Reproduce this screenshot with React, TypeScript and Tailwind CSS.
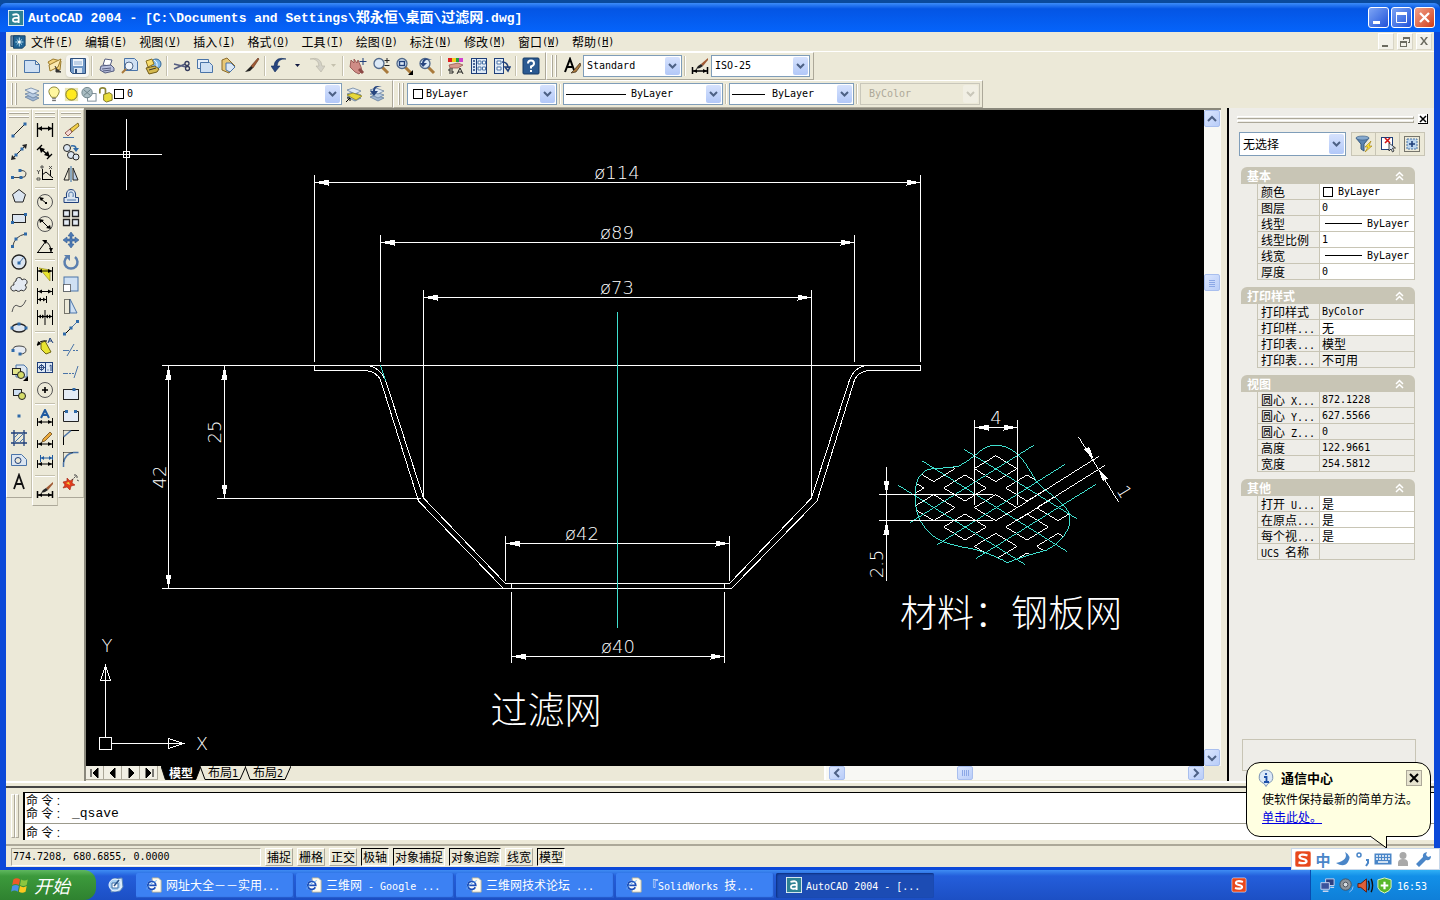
import type { ReactNode } from 'react';

const NAVY = '#1f3f7a';
const STEEL = '#4a74a8';
const CYAN = '#3fe0cf';

/* ---------- text ---------- */

// Latin runs are set in a half-width mono face, Chinese runs in the CJK face.
function Mix({ text, latin = "font-['DejaVu_Sans_Mono',monospace] text-[10px]" }: { text: string; latin?: string }) {
	return (
		<>
			{text.split(/([\x20-\x7e]+)/).map((part, i) =>
				i % 2 === 1 ? (
					<span key={i} className={`whitespace-pre ${latin}`}>
						{part}
					</span>
				) : (
					part
				),
			)}
		</>
	);
}

/* ---------- icons ---------- */

function Dot({ x, y }: { x: number; y: number }) {
	return <rect x={x - 1.5} y={y - 1.5} width={3} height={3} fill="#2f6aa8" stroke="none" />;
}

const dimBar = (y: number) => (
	<>
		<path d={`M1.5 ${y - 4}v8M16.5 ${y - 4}v8M2 ${y}h14`} stroke="#000" />
		<path d={`M2 ${y}l4 -2v4zM16 ${y}l-4 -2v4z`} fill="#000" />
	</>
);

const sheets = (
	<>
		<path d="M2 12l6 -2 8 3 -6 3z" fill="#9fb6d3" stroke="#5a7698" strokeWidth={0.7} />
		<path d="M2 9l6 -2 8 3 -6 3z" fill="#b9cce2" stroke="#5a7698" strokeWidth={0.7} />
		<path d="M2 5l6 -2 8 3 -6 3z" fill="#dfe9f5" stroke="#5a7698" strokeWidth={0.7} />
	</>
);

const lens = (
	<>
		<path d="M10 10l6 6" stroke="#a97a3c" strokeWidth={3} />
		<circle cx={7} cy={6.5} r={5} fill="#dce9f6" stroke="#50688a" strokeWidth={1.3} />
	</>
);

const brush = (
	<>
		<path d="M16 1l-7 8 2 2 6 -9z" fill="#a05a34" stroke="#5b2e1c" strokeWidth={0.6} />
		<path d="M9 9l2 2 -3 3 -5 1 3 -3z" fill="#222" />
	</>
);

const icons: Record<string, ReactNode> = {
	new: <path d="M1.500 3.500h11l4 4v8h-15zM12.500 3.500v4h4" fill="#cfe0f3" stroke={STEEL} />,
	open: (
		<>
			<path d="M2 5l5 -3 8 2 -1 9 -9 -3z" fill="#f3d27a" stroke="#9b7b2c" />
			<path d="M3 8l12 -6 -3 8 -8 4z" fill="#fbeab0" stroke="#9b7b2c" />
			<path d="M9 9l3 6M15 15h-5v-3z" stroke="#333" fill="#333" />
		</>
	),
	save: (
		<>
			<path d="M1.500 1.500h15v15h-13l-2 -2z" fill="#6f97c6" stroke="#2e4f7c" />
			<rect x={4} y={2} width={10} height={7} fill="#eef4fb" />
			<path d="M5 5h8M5 7h8" stroke="#8faed2" />
			<rect x={5} y={11} width={8} height={5} fill="#dbe6f2" />
			<rect x={6} y={12} width={2} height={4} fill="#2e4f7c" />
		</>
	),
	print: (
		<>
			<path d="M5 8l2 -6 7 1 -2 6z" fill="#fff" stroke="#555d80" />
			<path d="M3 9l10 -1 3 3v3l-9 2 -5 -3z" fill="#b8bfdc" stroke="#555d80" />
			<path d="M4 12l9 -1M5 14l8 -1" stroke="#555d80" />
		</>
	),
	preview: (
		<>
			<path d="M3.500 1.500h10l3 3v9h-13z" fill="#cfe0f3" stroke={STEEL} />
			<circle cx={8} cy={9} r={4} fill="#eef5fc" stroke="#50688a" />
			<path d="M5 12l-4 4" stroke="#a97a3c" strokeWidth={2} />
		</>
	),
	publish: (
		<>
			<circle cx={12} cy={7} r={5} fill="#7db7e8" stroke="#356796" />
			<path d="M10 3q5 3 2 9" stroke="#fff" fill="none" />
			<path d="M2 4l6 -2 2 5 -6 3z" fill="#f8dc6b" stroke="#8a701d" />
			<path d="M2 11l9 -2 4 3 -2 3 -8 2z" fill="#d5b94d" stroke="#6f5a17" />
			<path d="M5 13l7 -2" stroke="#333" />
		</>
	),
	cut: (
		<>
			<path d="M1 7l12 3M1 12l11 -5" stroke="#555d80" strokeWidth={1.5} />
			<circle cx={14} cy={6.5} r={2} fill="none" stroke="#333a5c" strokeWidth={1.3} />
			<circle cx={14.500} cy={11.500} r={2} fill="none" stroke="#333a5c" strokeWidth={1.3} />
		</>
	),
	copy: (
		<>
			<path d="M1.500 2.500h11v9h-11z" fill="#e5eef9" stroke={STEEL} />
			<path d="M4.500 5.500h9l3 3v7h-12z" fill="#cfe0f3" stroke={STEEL} />
		</>
	),
	paste: (
		<>
			<path d="M3 3l5 -2 8 8 -6 7 -7 -3z" fill="#e8c877" stroke="#8a6a2a" />
			<path d="M7 6l5 0 4 4 -5 5 -4 -2z" fill="#dbe8f6" stroke={STEEL} />
		</>
	),
	match: brush,
	undo: <path d="M15 2q-8 -1 -9 7h3l-5 6 -4 -6h3q1 -10 12 -7z" fill="#27457f" stroke="#16305e" strokeWidth={0.6} />,
	redo: <path d="M3 2q8 -1 9 7h-3l5 6 4 -6h-3q-1 -10 -12 -7z" fill="#d3d1c6" stroke="#b7b4a5" strokeWidth={0.6} />,
	pan: (
		<>
			<path d="M2 3l3 3 0 -4 3 4 1 -3 3 7 1 4 -3 3 -4 -2 -5 -5z" fill="#cf8c86" stroke="#8c4a46" strokeWidth={0.8} />
			<path d="M10 12l4 4" stroke="#8c4a46" strokeWidth={3} />
			<path d="M14 1v7M10.500 4.500h7" stroke={NAVY} />
		</>
	),
	zoomRt: (
		<>
			{lens}
			<path d="M15 1v5M12.500 3.500h5M12.500 8.500h5" stroke="#222" />
		</>
	),
	zoomWin: (
		<>
			{lens}
			<rect x={4.500} y={4.500} width={5} height={4} fill="none" stroke={NAVY} strokeWidth={1.4} />
			<path d="M18 13v5h-5z" fill="#000" />
		</>
	),
	zoomPrev: (
		<>
			{lens}
			<path d="M14 3q-7 -2 -8 3h3l-4 4 -3 -4h2q1 -7 10 -3z" fill="#27457f" />
		</>
	),
	props: (
		<>
			<path d="M1 1h4v4h-4z" fill="#e02020" />
			<path d="M5 1h4v4h-4z" fill="#f0d020" />
			<path d="M9 1h3v4h-3z" fill="#20a040" />
			<path d="M12 1h4v4h-4z" fill="#d040d0" />
			<path d="M2 8l9 -2 5 2 -5 3 -8 0z" fill="#d79a8e" stroke="#8c4a46" strokeWidth={0.7} />
			<path d="M6 12h-4v2h4v2h-4M10 17l3 -6 3 6M11 15h4" stroke="#222" fill="none" />
		</>
	),
	center: (
		<>
			<rect x={1.500} y={1.500} width={15} height={15} fill="#dfeaf6" stroke={NAVY} />
			<path d="M6.500 2v14" stroke={NAVY} />
			<path d="M3 4h2M3 7h2M3 10h2M3 13h2" stroke={NAVY} strokeWidth={1.4} />
			<path d="M8 4h3v3h-3zM12.500 4h3v3h-3zM8 10h3v3h-3zM12.500 10h3v3h-3z" fill="#fff" stroke={STEEL} />
		</>
	),
	palettes: (
		<>
			<rect x={1.500} y={1.500} width={9} height={15} fill="#dfeaf6" stroke={NAVY} />
			<path d="M4 4h4v3h-4zM4 10h4v3h-4z" fill="#fff" stroke={STEEL} />
			<path d="M9 5q6 0 6 6M12 10l3 4 2 -4z" stroke={NAVY} fill="none" strokeWidth={1.5} />
		</>
	),
	help: (
		<>
			<rect x={1} y={1} width={16} height={16} rx={1} fill="#2b5a92" stroke="#173a66" />
			<path d="M6 6.500q0 -3 3 -3t3 3q0 2 -3 3v2M9 13v2" stroke="#fff" fill="none" strokeWidth={2} />
		</>
	),
	textStyle: (
		<>
			<path d="M2 15l5 -13 4 11M4 10h5" stroke="#000" fill="none" strokeWidth={2} />
			<path d="M17 6l-6 7 -3 3 5 -1 5 -7z" fill="#a9793e" stroke="#3b2a17" strokeWidth={0.7} />
		</>
	),
	dimStyle: (
		<>
			<path d="M1.500 10v7M16.500 10v7M2 14h14" stroke="#000" strokeWidth={1.5} />
			<path d="M2 14l4 -2v4zM16 14l-4 -2v4z" fill="#000" />
			<path d="M17 1l-7 6 2 2 5 -6z" fill="#a05a34" />
			<path d="M10 7l2 2 -3 2 -4 1 2 -3z" fill="#222" />
		</>
	),
	layers: sheets,
	layerCur: (
		<>
			{sheets}
			<path d="M2 10l6 -2 9 3 -6 4z" fill="#e6d83a" stroke="#8a7d14" strokeWidth={0.7} />
			<path d="M1 17l4 -4M2 13h3v3" stroke="#000" fill="none" />
		</>
	),
	layerPrev: (
		<>
			{sheets}
			<path d="M14 2q-7 -1 -7 4h3l-4 5 -4 -5h3q0 -7 9 -4z" fill="#27457f" />
		</>
	),
	bulb: (
		<>
			<path d="M6 12q-3 -4 -3 -6a5.500 5 0 0 1 11 0q0 2 -3 6z" fill="#fff7a0" stroke="#8a8432" />
			<path d="M6.500 13.500h4M6.500 15.500h4" stroke="#555" />
		</>
	),
	sun: (
		<>
			<path d="M2 2h14v14h-14z" fill="#e9e5b0" />
			<circle cx={9} cy={9} r={6} fill="#ffea20" stroke="#77712a" />
		</>
	),
	vpFreeze: (
		<>
			<rect x={8} y={8} width={9} height={8} fill="#fff" stroke="#7a8a94" />
			<circle cx={7.500} cy={7} r={5.500} fill="#a9bcc2" stroke="#6c8288" />
			<path d="M4 4l7 6M4 10l7 -6" stroke="#6c8288" />
		</>
	),
	lock: (
		<>
			<path d="M3 8v-4q0 -2 3 -2t3 2v6" stroke="#8a8432" fill="none" strokeWidth={1.8} />
			<path d="M7 9l6 -2 3 2v6l-6 2 -3 -2z" fill="#e8dc38" stroke="#77712a" />
		</>
	),

	line: (
		<>
			<path d="M3 15l12 -12" stroke="#222" />
			<Dot x={3} y={15} />
			<Dot x={15} y={3} />
		</>
	),
	xline: (
		<>
			<path d="M2 16l14 -14" stroke="#222" />
			<path d="M1 17l1 -5 4 4zM17 1l-5 1 4 4z" fill="#222" />
			<Dot x={6} y={12} />
			<Dot x={12} y={6} />
		</>
	),
	pline: (
		<>
			<path d="M2 12.500h10q4 0 4 -3.500t-5 -3.500" stroke="#444" fill="none" />
			<Dot x={2.500} y={12.500} />
			<Dot x={11} y={12.500} />
			<Dot x={10} y={5.500} />
		</>
	),
	polygon: <path d="M9 2.500l6.500 5 -2.500 7.500h-8l-2.500 -7.500z" fill="#dbe5f0" stroke="#222" />,
	rect: (
		<>
			<rect x={2.500} y={5.500} width={13} height={8} fill="#dbe5f0" stroke="#222" />
			<Dot x={2.500} y={13.500} />
			<Dot x={15.500} y={5.500} />
		</>
	),
	arc: (
		<>
			<path d="M2.500 16q2 -11 13 -13" stroke="#444" fill="none" />
			<Dot x={2.500} y={15.500} />
			<Dot x={6} y={8} />
			<Dot x={15.500} y={3} />
		</>
	),
	circle: (
		<>
			<circle cx={9} cy={9} r={7} fill="#dbe5f0" stroke="#222" strokeWidth={1.3} />
			<path d="M9 10l5 -6" stroke={STEEL} />
			<Dot x={9} y={10} />
		</>
	),
	cloud: (
		<path
			d="M6 6a3 3 0 1 1 6 -1a3 3 0 1 1 3 5a3 3 0 1 1 -4 5a3 3 0 0 1 -5 0a3 3 0 1 1 -2 -5a3 3 0 0 1 2 -4z"
			fill="#e4eaf2"
			stroke="#333"
		/>
	),
	spline: <path d="M2 15q2 -9 6 -6t8 -6" stroke="#555" fill="none" />,
	ellipse: (
		<>
			<ellipse cx={9} cy={9} rx={7} ry={4} fill="#dbe5f0" stroke="#222" strokeWidth={1.3} />
			<Dot x={2} y={9} />
			<Dot x={16} y={9} />
			<Dot x={9} y={5} />
		</>
	),
	ellArc: (
		<>
			<path d="M3 10q-1 -5 6 -5t7 4 -6 4" fill="#e4eaf2" stroke="#444" />
			<Dot x={3} y={9.500} />
			<Dot x={10} y={13} />
		</>
	),
	insert: (
		<>
			<path d="M6 2h8l3 3v9h-11z" fill="#dbe5f0" stroke={STEEL} />
			<rect x={2.500} y={5.500} width={8} height={6} fill="#e3e58b" stroke="#222" />
			<circle cx={11} cy={12} r={3.500} fill="#d5dc68" stroke="#222" />
			<path d="M18 13v5h-5z" fill="#000" />
		</>
	),
	block: (
		<>
			<rect x={3.500} y={4.500} width={8} height={6} fill="#cfe0f3" stroke="#222" />
			<circle cx={12} cy={11} r={3.500} fill="#d5dc68" stroke="#222" />
		</>
	),
	point: <Dot x={9} y={9} />,
	hatch: (
		<>
			<path d="M4 1v16M14 1v16M1 4h16M1 14h16" stroke={NAVY} strokeWidth={1.3} />
			<path d="M4 9l5 -5M4 14l10 -10M9 14l5 -5" stroke={STEEL} />
		</>
	),
	region: (
		<>
			<path d="M1.500 3.500h10l5 5v6h-15z" fill="#dbe5f0" stroke={STEEL} />
			<circle cx={8} cy={9.500} r={3} fill="#ece9d8" stroke={NAVY} />
		</>
	),
	mtext: <path d="M4 16l5 -14 5 14M6 11h6" stroke="#111" fill="none" strokeWidth={1.8} />,

	dLinear: (
		<>
			<path d="M1.500 2v14M16.500 2v14M2 7.500h14" stroke="#000" strokeWidth={1.3} />
			<path d="M2 7.500l4 -2.500v5zM16 7.500l-4 -2.500v5z" fill="#000" />
		</>
	),
	dAligned: (
		<>
			<path d="M4 5l9 8M1 7l5 -5M11 16l5 -5" stroke="#000" strokeWidth={1.3} />
			<path d="M3 4l6 2 -4 4zM14 14l-6 -2 4 -4z" fill="#000" />
		</>
	),
	dOrdinate: (
		<>
			<path d="M6.500 4v11M6 10l4 -3 7 6M6 14.500h11M14.500 5v6" stroke="#000" fill="none" />
			<path d="M1 5l1.500 2 1.500 -2M2.500 7v2M1 13h3v2h-3zM5 1h2v2h-2zM13 1l3 3M16 1l-3 3" stroke="#333" fill="none" strokeWidth={0.8} />
		</>
	),
	dRadius: (
		<>
			<circle cx={9} cy={9} r={7.500} fill="none" stroke="#555" />
			<path d="M10 10l-5 -4" stroke="#000" />
			<path d="M3 4l5 1 -3 3zM9 9h2v2h-2z" fill="#000" />
		</>
	),
	dDiameter: (
		<>
			<circle cx={9} cy={9} r={7.500} fill="none" stroke="#555" />
			<path d="M5 5l8 8" stroke="#000" />
			<path d="M3 4l5 1 -4 3zM15 14l-5 -1 4 -3z" fill="#000" />
		</>
	),
	dAngular: (
		<>
			<path d="M1 15.500h16M2 15l8 -11M9 4q6 3 6 11" stroke="#000" fill="none" />
			<path d="M6 3l5 0 -1 4zM13 11h4l-2 4z" fill="#000" />
		</>
	),
	dQuick: (
		<>
			<path d="M3 3l11 2 0 11z" fill="#e9e430" stroke="#8a7d14" strokeWidth={0.6} />
			{dimBar(6)}
			<path d="M1.500 2v14M16.500 2v14" stroke="#000" />
		</>
	),
	dBaseline: (
		<>
			<path d="M1.500 1v16M2 4.500h14M16.500 1v7M2 12.500h8M10.500 9v7" stroke="#000" />
			<path d="M2 4.500l4 -2v4zM16 4.500l-4 -2v4zM2 12.500l3 -2v4zM10 12.500l-3 -2v4z" fill="#000" />
		</>
	),
	dContinue: (
		<>
			<path d="M1.500 1v15M9 1v15M16.500 1v15M2 7.500h14" stroke="#000" />
			<path d="M2 7.500l3 -2v4zM16 7.500l-3 -2v4zM9 7.500l-3 -2v4zM9 7.500l3 -2v4z" fill="#000" />
		</>
	),
	dLeader: (
		<>
			<path d="M5 6l4 -2 6 11 -5 2 -5 -5z" fill="#e9e430" stroke="#6d6412" />
			<path d="M1 8q3 -5 10 -4" stroke="#000" fill="none" />
			<path d="M1 9l1 -5 3 3z" fill="#000" />
			<path d="M12 6l2 -5 3 5M13 4h3" stroke={NAVY} fill="none" />
		</>
	),
	dTol: (
		<>
			<rect x={1.500} y={3.500} width={15} height={10} fill="#dfeaf6" stroke={NAVY} />
			<path d="M9.500 4v9M12 10.500v1M13.500 7l1.500 -1v6" stroke={NAVY} fill="none" />
			<circle cx={5.500} cy={8.500} r={2.300} fill="none" stroke={NAVY} />
			<path d="M5.500 5v7M2 8.500h7" stroke={NAVY} strokeWidth={0.8} />
		</>
	),
	dCenter: (
		<>
			<circle cx={9} cy={9} r={7.500} fill="none" stroke="#555" />
			<path d="M9 6v6M6 9h6" stroke="#000" strokeWidth={1.6} />
		</>
	),
	dEdit: (
		<>
			<path d="M5 9l4 -8 4 8M6.500 6h5" stroke="#1f5aa0" fill="none" strokeWidth={2} />
			{dimBar(13)}
		</>
	),
	dTextEdit: (
		<>
			<path d="M14 1l-7 7 -1 3 3 -1 7 -7z" fill="#e9a83a" stroke="#5a3a10" strokeWidth={0.7} />
			{dimBar(13)}
		</>
	),
	dUpdate: (
		<>
			<path d="M4.500 2v7M16.500 2v7M5 5h11" stroke="#1f5aa0" />
			<path d="M5 5l3 -2v4zM16 5l-3 -2v4z" fill="#1f5aa0" />
			{dimBar(11)}
		</>
	),

	erase: (
		<>
			<path d="M16 2l-8 6 2 3 7 -6z" fill="#f3d04a" stroke="#6b5410" strokeWidth={0.8} />
			<path d="M8 8l2 3 -4 4 -3 -3z" fill="#f4d9d4" stroke="#7d3a36" strokeWidth={0.8} />
			<path d="M1 16.500h11" stroke={STEEL} />
		</>
	),
	mcopy: (
		<>
			<circle cx={5} cy={5} r={3.500} fill="#dbe5f0" stroke="#222" />
			<circle cx={9} cy={12} r={3.500} fill="#dbe5f0" stroke="#222" />
			<circle cx={14} cy={14} r={3} fill="#dbe5f0" stroke="#222" />
			<path d="M9 3q5 -1 5 3" stroke="#2f6aa8" fill="none" strokeWidth={1.500} />
			<path d="M11 5h6l-3 4z" fill="#2f6aa8" />
		</>
	),
	mirror: (
		<>
			<path d="M7 3v12h-5z" fill="#ece9d8" stroke="#222" />
			<path d="M11 3v12h5z" fill="#bcd0e8" stroke="#222" />
			<path d="M9 1v16" stroke="#2f6aa8" />
		</>
	),
	offset: (
		<>
			<path d="M2 15.500h14.500v-5h-3q1 -8 -4.500 -8t-4.500 8h-2.500z" fill="#dbe5f0" stroke={NAVY} />
			<path d="M5 13h9M7 10q-1 -5 2 -5t2 5" fill="none" stroke={STEEL} />
		</>
	),
	array: (
		<path
			d="M1.500 1.500h6v6h-6zM10.500 1.500h6v6h-6zM10.500 10.500h6v6h-6zM1.500 10.500h6v6h-6z"
			fill="#e4ecf5"
			stroke="#222"
			strokeWidth={1.3}
		/>
	),
	move: (
		<path
			d="M9 1l3 4h-2v3h3v-2l4 3 -4 3v-2h-3v3h2l-3 4 -3 -4h2v-3h-3v2l-4 -3 4 -3v2h3v-3h-2z"
			fill="#4a78b4"
			stroke="#345c90"
			strokeWidth={0.6}
		/>
	),
	rotate: (
		<>
			<path d="M5 4a6.500 6.500 0 1 0 8 0" fill="none" stroke="#5b7fae" strokeWidth={2.500} />
			<path d="M2 2h6v6z" fill="#5b7fae" />
		</>
	),
	scale: (
		<>
			<rect x={2} y={2} width={14} height={14} fill="#cfe0f3" stroke={STEEL} />
			<rect x={1.500} y={9.500} width={7} height={7} fill="#fff" stroke="#000" strokeDasharray="1 1" />
		</>
	),
	stretch: (
		<>
			<path d="M8 2l7 14h-7z" fill="#cfe0f3" stroke={STEEL} />
			<path d="M2.500 2.500h5v14h-5z" fill="none" stroke="#000" strokeDasharray="1 1" />
		</>
	),
	lengthen: (
		<>
			<path d="M3 15l5 -5" stroke="#000" />
			<path d="M8 10l7 -7" stroke={STEEL} />
			<Dot x={2.500} y={15} />
			<Dot x={9} y={9} />
			<Dot x={15.500} y={2.500} />
		</>
	),
	trim: (
		<>
			<path d="M1 9.500h6M5 15l7 -12" stroke={STEEL} />
			<path d="M11 9.500h6" stroke={STEEL} strokeDasharray="2 1" />
		</>
	),
	extend: (
		<>
			<path d="M1 10.500h5M12 15l4 -12" stroke={STEEL} />
			<path d="M7 10.500h6" stroke={STEEL} strokeDasharray="2 1" />
		</>
	),
	breakPt: (
		<>
			<rect x={1.500} y={4.500} width={15} height={10} fill="#e4ecf5" stroke="#222" />
			<Dot x={12} y={4.500} />
		</>
	),
	break: (
		<>
			<path d="M4 4.500h-2.500v10h15v-10h-2.500" fill="#e4ecf5" stroke="#222" />
			<Dot x={4.500} y={4.500} />
			<Dot x={13.500} y={4.500} />
		</>
	),
	chamfer: (
		<>
			<path d="M1.500 16v-8M9 1.500h8" stroke="#000" />
			<path d="M1.500 8l7.500 -6.500" stroke={STEEL} strokeWidth={1.5} />
			<path d="M1.500 1.500h7M1.500 1.500v7" stroke="#000" strokeDasharray="1 1" />
		</>
	),
	fillet: (
		<>
			<path d="M1.500 16v-4q1 -9 10 -10.500h5" stroke={STEEL} fill="none" strokeWidth={1.5} />
			<path d="M1.500 1.500h9M1.500 1.500v9" stroke="#000" strokeDasharray="1 1" />
		</>
	),
	explode: (
		<>
			<path d="M1 9l4 -1 0 -3 3 3 3 -2 -1 4 3 2 -4 1 -1 4 -3 -3 -4 1 2 -3z" fill="#e23c1c" stroke="#a02010" strokeWidth={0.6} />
			<path d="M4 10l3 -1 1 3z" fill="#f6d23a" />
			<path d="M10 7l5 -5M13 1v3M16 4h-3M15 7l2 1" stroke="#444" strokeDasharray="2 1" />
		</>
	),

	filter: (
		<>
			<path d="M1 3h13l-5 6v7l-3 -2v-5z" fill="#5c84b0" stroke="#34587f" />
			<ellipse cx={7.500} cy={3} rx={6.500} ry={2} fill="#86a9cd" stroke="#34587f" strokeWidth={0.6} />
			<path d="M16 6l-6 6h3l-3 5 7 -6h-3z" fill="#ffe233" stroke="#9c7b10" strokeWidth={0.6} />
		</>
	),
	pick: (
		<>
			<rect x={2.500} y={2.500} width={11} height={12} fill="#fff" stroke={NAVY} />
			<path d="M6 3l5 5M11 3l-5 5" stroke="#d01010" strokeWidth={1.6} />
			<path d="M10 8v8l2 -2 1.500 3 1.500 -1 -1.500 -3h3z" fill="#dfeaf6" stroke="#222" strokeWidth={0.8} />
		</>
	),
	quickSel: (
		<>
			<rect x={1.500} y={1.500} width={15} height={15} fill="none" stroke="#000" strokeDasharray="1 1" />
			<rect x={4} y={4} width={10} height={10} fill="#bcd6ee" stroke={STEEL} strokeDasharray="2 1" />
			<path d="M9 6v6M6 9h6" stroke={NAVY} strokeWidth={1.6} />
		</>
	),

	ie: (
		<>
			<path d="M7 1h7l3 3v13h-10z" fill="#fdfbf0" stroke="#b9b59a" />
			<circle cx={6.500} cy={9.500} r={5.500} fill="#fff" />
			<path d="M10.500 11.500a4.500 4.500 0 1 1 0.500 -2h-8" fill="none" stroke="#1c4fb8" strokeWidth={2} />
			<path d="M1 14q-1 -4 11 -10" stroke="#64a6f0" fill="none" />
		</>
	),
	doc: (
		<>
			<path d="M1 2h10v12h-10z" fill="#6d8aa6" stroke="#2c4b6b" />
			<path d="M4 2h13v11l-3 3h-10z" fill="#1f6394" stroke="#123d63" />
			<path d="M10.500 4v10M6 9h9M7.500 6l6 6M13.500 6l-6 6" stroke="#c8ecf8" />
			<circle cx={10.500} cy={9} r={1.500} fill="#fff" />
		</>
	),
	app: (
		<>
			<rect x={0.500} y={0.500} width={17} height={17} fill="#2e8294" stroke="#eaf6f8" />
			<path d="M5 5.500q7 -2 7 1.500v7.500M12 9q-6.500 -1 -6.500 2.200t6.500 1.300" fill="none" stroke="#fff" strokeWidth={2} />
		</>
	),
	desktop: (
		<>
			<path d="M5 3l10 -1 1 9 -3 4 -9 1z" fill="#d8e8f8" stroke="#5c86b8" />
			<circle cx={8} cy={9} r={6} fill="#a9d0f2" stroke="#e8f4ff" />
			<path d="M5 7h6v5h-6z" fill="#fff" stroke="#3f70a8" />
			<path d="M12 4l-5 6" stroke="#2c568c" strokeWidth={1.500} />
		</>
	),
	sogou: (
		<>
			<rect x={1} y={1} width={16} height={16} rx={2} fill="#e8481c" stroke="#fff" strokeWidth={0.6} />
			<path d="M13.500 5.500C9 4 5.500 4.500 5.500 6.700C5.500 9.500 12.500 8.500 12.500 11.200C12.500 13.500 8 13.500 4.500 12.300" fill="none" stroke="#fff" strokeWidth={2.300} />
		</>
	),
	flag: (
		<>
			<path d="M3 4q3 -2 6 0l-1 5q-3 -2 -6 0z" fill="#ee5a28" />
			<path d="M10 4q3 2 6 0l-1 5q-3 2 -6 0z" fill="#8cc63f" />
			<path d="M2 10q3 -2 6 0l-1 5q-3 -2 -6 0z" fill="#4a90e8" />
			<path d="M9 10q3 2 6 0l-1 5q-3 2 -6 0z" fill="#fcc820" />
		</>
	),
	net: (
		<>
			<path d="M7 2h9v7h-9z" fill="#2c3f80" stroke="#c8d4f0" />
			<path d="M2 6h9v7h-9z" fill="#3a539c" stroke="#c8d4f0" />
			<path d="M4 15h6M12 11h4" stroke="#c8d4f0" strokeWidth={1.5} />
		</>
	),
	sound: (
		<>
			<circle cx={8} cy={8} r={6} fill="#8d959c" stroke="#49525c" />
			<circle cx={8} cy={8} r={2.500} fill="#d8dde2" stroke="#49525c" />
			<path d="M12 16q4 -2 4 -6" stroke="#9cc4f8" fill="none" />
		</>
	),
	speaker: (
		<>
			<path d="M1 7h3l6 -5v14l-6 -5h-3z" fill="#e06038" stroke="#5b1c10" />
			<path d="M12 4q2 5 0 10M15 2q3 7 0 14" stroke="#111" fill="none" strokeWidth={1.5} />
		</>
	),
	shield: (
		<>
			<path d="M9 1l7 2v8q-1 4 -7 6q-6 -2 -7 -6v-8z" fill="#58b82a" stroke="#e3f5c8" />
			<path d="M9 5v8M5 9h8" stroke="#fff" strokeWidth={2.300} />
		</>
	),
	moon: <path d="M11 2q4 8 -9 11q8 5 12 -1t-3 -10z" fill="#4a86c8" />,
	punct: (
		<>
			<circle cx={5} cy={5} r={2} fill="none" stroke="#4a86c8" strokeWidth={1.5} />
			<path d="M12 10h2v3l-2 3" stroke="#4a86c8" strokeWidth={2} fill="none" />
		</>
	),
	keyboard: (
		<>
			<rect x={0.500} y={3.500} width={17} height={11} fill="#4a86c8" />
			<path d="M2 6h14M2 9h14" stroke="#fff" strokeWidth={1.5} strokeDasharray="2 1" />
			<path d="M4 12h10" stroke="#fff" strokeWidth={1.5} />
		</>
	),
	person: (
		<>
			<circle cx={9} cy={5.500} r={3.500} fill="#a9a9a9" />
			<path d="M4 16v-3q0 -4 5 -4t5 4v3z" fill="#a9a9a9" />
		</>
	),
	wrench: <path d="M2 14l7 -7q-1 -4 4 -5l-1 3 2 2 3 -1q0 5 -5 4l-7 7z" fill="#4a86c8" />,
	info: (
		<>
			<path d="M9 1a7.500 7 0 0 1 2 13.500l-2 3 -2 -3a7.500 7 0 0 1 2 -13.500z" fill="#dce9f8" stroke="#7a93b4" />
			<path d="M9 4v2M7 8h2.500v5M7 13h5" stroke="#1c4fa8" strokeWidth={1.800} fill="none" />
		</>
	),
};

function Icon({ name, className = 'size-[18px]' }: { name: string; className?: string }) {
	return (
		<svg viewBox="0 0 18 18" className={`${className} shrink-0`} fill="none" aria-hidden="true">
			{icons[name]}
		</svg>
	);
}

/* ---------- controls ---------- */

function ToolButton({ name, active }: { name: string; active?: boolean }) {
	return (
		<button
			type="button"
			aria-label={name}
			className={`flex h-[22px] w-[23px] shrink-0 items-center justify-center ${active ? 'rounded-sm bg-[#f8f7f2] shadow-sm' : ''}`}
		>
			<Icon name={name} />
		</button>
	);
}

function VSep() {
	return <div className="mx-[2px] h-5 w-[2px] shrink-0 border-l border-r border-l-[#c5c1ae] border-r-white" />;
}

function HSep() {
	return <div className="mx-px my-[2px] h-[2px] w-5 border-t border-b border-t-[#c5c1ae] border-b-white" />;
}

function Caret({ muted }: { muted?: boolean }) {
	return (
		<svg viewBox="0 0 13 6" className="h-[6px] w-[13px] shrink-0" aria-hidden="true">
			<path d="M4 1h5l-2.500 3z" fill={muted ? '#c5c1ae' : '#101840'} />
		</svg>
	);
}

function Grip() {
	return (
		<div className="flex w-[13px] shrink-0 justify-center gap-[2px] self-stretch py-[2px]">
			<div className="w-[2px] border-r border-l border-l-white border-r-[#aca899]" />
			<div className="w-[2px] border-r border-l border-l-white border-r-[#aca899]" />
		</div>
	);
}

function Combo({
	label,
	value,
	width,
	pad = 'pl-[3px]',
	disabled,
	cjk,
	height = 'h-[22px]',
	children,
}: {
	label: string;
	value: string;
	width: string;
	pad?: string;
	disabled?: boolean;
	cjk?: boolean;
	height?: string;
	children?: ReactNode;
}) {
	return (
		<div className={`relative shrink-0 ${width} ${height}`}>
			<select
				aria-label={label}
				disabled={disabled}
				defaultValue={value}
				className={`size-full appearance-none border ${cjk ? "font-['Noto_Sans_CJK_SC',sans-serif] text-xs" : "font-['DejaVu_Sans_Mono',monospace] text-[10px]"} ${pad} ${disabled ? 'border-[#c9c7ba] bg-[#ece9d8] text-[#aca899] opacity-100' : 'border-[#7f9db9] bg-white text-black'}`}
			>
				<option>{value}</option>
			</select>
			<div className="pointer-events-none absolute inset-y-0 left-[3px] flex items-center">{children}</div>
			<div
				className={`pointer-events-none absolute top-[2px] right-[2px] bottom-[2px] flex w-[15px] items-center justify-center rounded-xs ${disabled ? 'bg-[#f1efe4]' : 'bg-linear-to-b from-[#d6e2fd] to-[#b2c8f8]'}`}
			>
				<svg viewBox="0 0 9 6" className="h-[6px] w-[9px]" aria-hidden="true">
					<path d="M1 1l3.500 3.500l3.500 -3.500" fill="none" stroke={disabled ? '#c9c7ba' : '#4d6185'} strokeWidth={2} />
				</svg>
			</div>
		</div>
	);
}

function Swatch() {
	return <div className="size-[10px] border border-black bg-white" />;
}

const bar = 'flex h-7 items-center border border-t-white border-l-white border-r-[#aca899] border-b-[#aca899]';

/* ---------- title, menu, toolbars ---------- */

function TitleBar() {
	const frame = 'flex size-[21px] items-center justify-center rounded-[3px] border border-white';
	return (
		<header className="flex h-[29px] shrink-0 items-center rounded-t-md bg-linear-to-b from-[#3c8cf8] via-[#0455e4] via-20% to-[#0564fb] pr-[5px] pl-2">
			<Icon name="app" className="size-4" />
			<h1 className="ml-1 flex-1 font-['Noto_Sans_CJK_SC',sans-serif] text-sm leading-[20px] font-bold whitespace-nowrap text-white">
				<Mix
					text="AutoCAD 2004 - [C:\Documents and Settings\郑永恒\桌面\过滤网.dwg]"
					latin="font-['Liberation_Mono',monospace] text-[13px]"
				/>
			</h1>
			<div className="flex gap-[2px]">
				<button type="button" aria-label="最小化" className={`${frame} bg-linear-to-br from-[#7ea4f4] to-[#2150d8]`}>
					<svg viewBox="0 0 19 19" className="size-[19px]">
						<path d="M4 13h7v3h-7z" fill="#fff" />
					</svg>
				</button>
				<button type="button" aria-label="还原" className={`${frame} bg-linear-to-br from-[#7ea4f4] to-[#2150d8]`}>
					<svg viewBox="0 0 19 19" className="size-[19px]">
						<path d="M4.500 5v9.500h10v-10M4 5h11" fill="none" stroke="#fff" />
						<path d="M4 4h11v3h-11z" fill="#fff" />
					</svg>
				</button>
				<button type="button" aria-label="关闭" className={`${frame} bg-linear-to-br from-[#f0a088] to-[#d03a10]`}>
					<svg viewBox="0 0 19 19" className="size-[19px]">
						<path d="M5 5l9 9M14 5l-9 9" stroke="#fff" strokeWidth={2.300} />
					</svg>
				</button>
			</div>
		</header>
	);
}

const menus = [
	['文件', 'F'],
	['编辑', 'E'],
	['视图', 'V'],
	['插入', 'I'],
	['格式', 'O'],
	['工具', 'T'],
	['绘图', 'D'],
	['标注', 'N'],
	['修改', 'M'],
	['窗口', 'W'],
	['帮助', 'H'],
];

function MenuBar() {
	return (
		<nav className="flex h-5 shrink-0 items-center border-b border-white pr-[2px] pl-1">
			<Icon name="doc" className="size-4" />
			<div className="flex flex-1 gap-3 pl-[5px]">
				{menus.map(([name, key]) => (
					<button key={key} type="button" className="flex items-center leading-[18px]">
						{name}
						<span className="font-['DejaVu_Sans_Mono',monospace] text-[10px]">
							(<u>{key}</u>)
						</span>
					</button>
				))}
			</div>
			<div className="flex gap-[3px]">
				{['M3 11h6v2h-6z', 'M5 3h7v6h-2v-1h1v-3h-5v1h-1zM2 7h7v6h-7zM3 9v3h5v-3z', 'M3 3h2l2 3l2 -3h2l-3 4l3 4h-2l-2 -3l-2 3h-2l3 -4z'].map(d => (
					<button key={d} type="button" aria-label="文档窗口" className="h-[17px] w-4 border border-t-white border-l-white border-r-[#d8d5c6] border-b-[#d8d5c6] bg-[#f3f2ea]">
						<svg viewBox="0 0 14 15" className="h-[15px] w-[14px]">
							<path d={d} fill="#6b6b60" fillRule="evenodd" />
						</svg>
					</button>
				))}
			</div>
		</nav>
	);
}

const standardGroups = [
	['new', 'open', 'save'],
	['print', 'preview', 'publish'],
	['cut', 'copy', 'paste', 'match'],
];

function Toolbars() {
	return (
		<div className="flex shrink-0 flex-col">
			<div className="flex">
				<div className={`${bar} w-[540px] shrink-0`}>
					<Grip />
					{standardGroups.map((group, i) => (
						<div key={i} className="flex items-center">
							{group.map(name => (
								<ToolButton key={name} name={name} active={name === 'save'} />
							))}
							<VSep />
						</div>
					))}
					<ToolButton name="undo" />
					<Caret />
					<ToolButton name="redo" />
					<Caret muted />
					<VSep />
					{['pan', 'zoomRt', 'zoomWin', 'zoomPrev'].map(name => (
						<ToolButton key={name} name={name} />
					))}
					<VSep />
					{['props', 'center', 'palettes'].map(name => (
						<ToolButton key={name} name={name} />
					))}
					<VSep />
					<ToolButton name="help" />
				</div>
				<div className={`${bar} w-[268px] shrink-0`}>
					<Grip />
					<ToolButton name="textStyle" />
					<Combo label="文字样式" value="Standard" width="w-[99px]" />
					<VSep />
					<ToolButton name="dimStyle" />
					<Combo label="标注样式" value="ISO-25" width="w-[99px]" />
				</div>
			</div>
			<div className="flex">
				<div className={`${bar} w-[387px] shrink-0`}>
					<Grip />
					<ToolButton name="layers" />
					<Combo label="图层" value="0" width="w-[299px]" pad="pl-[83px]">
						{['bulb', 'sun', 'vpFreeze', 'lock'].map(name => (
							<Icon key={name} name={name} className="size-[17px]" />
						))}
						<Swatch />
					</Combo>
					<ToolButton name="layerCur" />
					<ToolButton name="layerPrev" />
				</div>
				<div className={`${bar} w-[590px] shrink-0`}>
					<Grip />
					<Combo label="颜色" value="ByLayer" width="w-[150px]" pad="pl-[18px]">
						<div className="pl-[3px]">
							<Swatch />
						</div>
					</Combo>
					<VSep />
					<Combo label="线型" value="ByLayer" width="w-[160px]" pad="pl-[67px]">
						<div className="h-px w-[60px] bg-black" />
					</Combo>
					<VSep />
					<Combo label="线宽" value="ByLayer" width="w-[125px]" pad="pl-[42px]">
						<div className="h-px w-[33px] bg-black" />
					</Combo>
					<VSep />
					<Combo label="打印样式" value="ByColor" width="w-[120px]" pad="pl-[8px]" disabled />
				</div>
			</div>
		</div>
	);
}

const drawTools = [
	['line', 'xline', 'pline', 'polygon', 'rect', 'arc', 'circle', 'cloud', 'spline', 'ellipse', 'ellArc', 'insert', 'block', 'point', 'hatch', 'region', 'mtext'],
];
const dimTools = [
	['dLinear', 'dAligned', 'dOrdinate'],
	['dRadius', 'dDiameter', 'dAngular'],
	['dQuick', 'dBaseline', 'dContinue'],
	['dLeader', 'dTol', 'dCenter'],
	['dEdit', 'dTextEdit', 'dUpdate'],
	['dimStyle'],
];
const modifyTools = [
	['erase', 'mcopy', 'mirror', 'offset', 'array', 'move', 'rotate', 'scale', 'stretch', 'lengthen', 'trim', 'extend', 'breakPt', 'break', 'chamfer', 'fillet', 'explode'],
];

function SideTools({ groups }: { groups: string[][] }) {
	return (
		<div className="flex w-[26px] shrink-0 flex-col items-center self-start border border-t-white border-l-white border-r-[#c5c1ae] border-b-[#aca899] pb-1">
			<div className="flex h-[9px] w-5 flex-col gap-[2px] pt-[2px]">
				<div className="h-[2px] border-t border-b border-t-white border-b-[#aca899]" />
				<div className="h-[2px] border-t border-b border-t-white border-b-[#aca899]" />
			</div>
			{groups.map((group, i) => (
				<div key={i}>
					{i > 0 && <HSep />}
					{group.map(name => (
						<ToolButton key={name} name={name} />
					))}
				</div>
			))}
		</div>
	);
}

/* ---------- drawing ---------- */

// Arrow head with its tip on (x, y); the body trails off at the given angle.
function Arrow({ x, y, angle }: { x: number; y: number; angle: number }) {
	return <path d="M0 0L14 -3V3Z" fill="#fff" stroke="none" transform={`translate(${x} ${y}) rotate(${angle})`} />;
}

function HDim({ x1, x2, y }: { x1: number; x2: number; y: number }) {
	return (
		<>
			<path d={`M${x1} ${y}H${x2}`} />
			<Arrow x={x1} y={y} angle={0} />
			<Arrow x={x2} y={y} angle={180} />
		</>
	);
}

function VDim({ y1, y2, x }: { y1: number; y2: number; x: number }) {
	return (
		<>
			<path d={`M${x} ${y1}V${y2}`} />
			<Arrow x={x} y={y1} angle={90} />
			<Arrow x={x} y={y2} angle={-90} />
		</>
	);
}

const labels = [
	{ x: 617, y: 179, text: 'ø114' },
	{ x: 617, y: 239, text: 'ø89' },
	{ x: 617, y: 294, text: 'ø73' },
	{ x: 582, y: 540, text: 'ø42' },
	{ x: 618, y: 653, text: 'ø40' },
	{ x: 996, y: 424, text: '4' },
	{ x: 202, y: 750, text: 'X' },
	{ x: 107, y: 652, text: 'Y' },
];

const turned = [
	{ x: 166, y: 477, angle: -90, text: '42' },
	{ x: 221, y: 432, angle: -90, text: '25' },
	{ x: 883, y: 564, angle: -90, text: '2.5' },
	{ x: 1119, y: 495, angle: 58, text: '1' },
];

const cells = [
	[407, 206],
	[221, 206],
	[315, 264],
	[501, 264],
	[128, 264],
	[407, 323],
	[221, 323],
	[594, 323],
	[315, 381],
	[501, 381],
	[407, 439],
	[594, 439],
	[501, 498],
];

const blob =
	'M168 320C162 270 165 225 205 208C235 203 270 205 297 198C325 185 350 160 372 145C400 130 440 132 475 165C500 190 510 215 530 245C555 275 590 290 612 318C635 340 632 360 625 385C610 415 590 435 560 450C520 462 490 468 443 488C400 465 370 455 340 447C300 440 240 430 210 400C185 375 170 345 168 320Z';

function Drawing() {
	return (
		<svg
			viewBox="86 110 1118 655"
			preserveAspectRatio="xMinYMin meet"
			className="absolute inset-0 size-full bg-black"
			fill="none"
			stroke="#fff"
			shapeRendering="crispEdges"
			role="img"
			aria-label="过滤网"
		>
			{/* crosshair */}
			<path d="M90 154.500H162M126.500 119V190M123.500 151.500h6v6h-6z" />

			{/* overall dimensions */}
			<path d="M314.500 175V362M920.500 175V362M380.500 235V362M854.500 235V362M423.500 290V498M811.500 290V498" />
			<HDim x1={314.5} x2={920.5} y={182.5} />
			<HDim x1={380.5} x2={854.5} y={242.5} />
			<HDim x1={423.5} x2={811.5} y={297.5} />
			<path d="M505.500 536V581M729.500 536V581M511.500 592V663M724.500 592V663" />
			<HDim x1={505.5} x2={729.5} y={543.5} />
			<HDim x1={511.5} x2={724.5} y={656.5} />
			<path d="M217 498.500H421" />
			<VDim y1={365.5} y2={588.5} x={168.5} />
			<VDim y1={365.5} y2={498.5} x={224.5} />

			{/* section */}
			<path d="M162 365.500H920.500V370.500H868Q858 372 854.500 380L817 501L731.500 588.500M162 588.500H732" />
			<path d="M314.500 365V370.500H366Q377 372 380.500 380L418.500 501L503.500 588.500" />
			<path d="M369 365.500Q380 368 385.500 380L423.500 498L505.500 583.500H729.500L811.500 498L849.500 380Q854 368 865 365.500" />
			<path d="M511.500 583V588M724.500 583V588" />
			<path d="M617.500 312V628M380.500 365L385.500 381" stroke={CYAN} />

			{/* expanded metal detail */}
			<g transform="translate(860 400) scale(0.33333)" strokeWidth={3}>
				<clipPath id="blob">
					<path d={blob} />
				</clipPath>
				<g clipPath="url(#blob)">
					{cells.map(([x, y]) => (
						<path key={`${x}-${y}`} d={`M${x - 64} ${y}L${x} ${y - 39}L${x + 64} ${y}L${x} ${y + 39}Z`} />
					))}
				</g>
				<path d={blob} stroke={CYAN} />
				<path
					d="M312 148L650 356M187 183L620 454M115 256L494 493M150 368L521 136M232 434L615 193M349 475L708 253"
					stroke={CYAN}
				/>
				<path d="M472 323L718 168M472 361L735 196M655 110L775 305" />
			</g>
			<path d="M974.500 420V505M1017.500 420V505M879 494.500H993M879 520.500H993M886.500 467V581" />
			<HDim x1={974.5} x2={1017.5} y={427.5} />
			<Arrow x={886.5} y={494.5} angle={-90} />
			<Arrow x={886.5} y={520.5} angle={90} />
			<Arrow x={1094} y={460} angle={-122} />
			<Arrow x={1098} y={468} angle={58} />

			{/* UCS icon */}
			<path d="M99.500 737.500h12v12h-12zM111 743.500H183M105.500 737V666M168.500 738.500L183 743.500L168.500 748.500ZM100.500 680.500L105.500 666L110.500 680.500Z" />

			<g className="font-['DejaVu_Sans','Inter',sans-serif] text-[18px] font-extralight" fill="#fff" stroke="none" textAnchor="middle">
				{labels.map(l => (
					<text key={l.text} x={l.x} y={l.y}>
						{l.text}
					</text>
				))}
				{turned.map(l => (
					<text key={l.text} transform={`translate(${l.x} ${l.y}) rotate(${l.angle})`}>
						{l.text}
					</text>
				))}
			</g>
			<g className="font-['Noto_Sans_CJK_SC',sans-serif] text-[37px] font-light" fill="#fff" stroke="none" textAnchor="middle">
				<text x={546} y={724}>
					过滤网
				</text>
				<text x={1011} y={627}>
					材料：钢板网
				</text>
			</g>
		</svg>
	);
}

const scrollPaths = {
	up: 'M4 10l4 -4l4 4',
	down: 'M4 6l4 4l4 -4',
	left: 'M10 4l-4 4l4 4',
	right: 'M6 4l4 4l-4 4',
	thumbV: 'M5 5.500h6M5 7.500h6M5 9.500h6M5 11.500h6',
	thumbH: 'M5.500 5v6M7.500 5v6M9.500 5v6M11.500 5v6',
};

function ScrollButton({ kind, className }: { kind: keyof typeof scrollPaths; className: string }) {
	const thumb = kind.startsWith('thumb');
	return (
		<button
			type="button"
			aria-label={kind}
			className={`flex shrink-0 items-center justify-center overflow-hidden rounded-xs border border-[#a9bfee] bg-linear-to-br from-[#dbe6fe] to-[#b9cdf8] ${className}`}
		>
			<svg viewBox="0 0 16 16" className="size-4 shrink-0">
				<path d={scrollPaths[kind]} fill="none" stroke={thumb ? '#8ca8e6' : '#4d6185'} strokeWidth={thumb ? 1 : 2} />
			</svg>
		</button>
	);
}

function LayoutTab({ text, active }: { text: string; active?: boolean }) {
	return (
		<button
			type="button"
			className={`relative -ml-px flex h-[14px] items-center justify-center leading-[14px] ${active ? 'w-10 font-bold text-white' : 'w-[46px]'}`}
		>
			<svg viewBox="0 0 46 14" preserveAspectRatio="none" className="absolute inset-0 size-full" aria-hidden="true">
				<path d="M0 0L5 13.500H40L46 0" fill={active ? '#000' : '#ece9d8'} stroke="#000" />
			</svg>
			<span className="relative">
				<Mix text={text} />
			</span>
		</button>
	);
}

function DrawingArea() {
	return (
		<main className="flex min-w-0 flex-1 flex-col border-t-2 border-l-2 border-[#8a887c]">
			<div className="flex min-h-0 flex-1">
				<div className="relative min-w-0 flex-1 bg-black">
					<Drawing />
				</div>
				<div className="flex w-[17px] shrink-0 flex-col bg-[#f8f8f4]">
					<ScrollButton kind="up" className="h-[17px] w-4" />
					<div className="h-[147px]" />
					<ScrollButton kind="thumbV" className="h-[17px] w-4" />
					<div className="flex-1" />
					<ScrollButton kind="down" className="h-[17px] w-4" />
				</div>
			</div>
			<div className="flex h-[15px] shrink-0 items-start">
				{['M5 3v8M12 2v10l-5 -5z', 'M11 2v10l-5 -5z', 'M7 2v10l5 -5z', 'M13 3v8M6 2v10l5 -5z'].map(d => (
					<button
						key={d}
						type="button"
						aria-label="布局"
						className="h-[14px] w-[18px] border-r border-b border-r-[#aca899] border-b-[#aca899] bg-[#f1efe4]"
					>
						<svg viewBox="0 0 18 14" className="h-[14px] w-[18px]">
							<path d={d} fill="#000" stroke="#000" />
						</svg>
					</button>
				))}
				<div className="flex pl-[4px]">
					<LayoutTab text="模型" active />
					<LayoutTab text="布局1" />
					<LayoutTab text="布局2" />
				</div>
				<div className="flex-1" />
				<div className="flex w-[380px] shrink-0 border-l-2 border-white bg-[#f8f8f4] pl-[3px]">
					<ScrollButton kind="left" className="h-[14px] w-4" />
					<div className="w-28" />
					<ScrollButton kind="thumbH" className="h-[14px] w-4" />
					<div className="flex-1" />
					<ScrollButton kind="right" className="h-[14px] w-4" />
				</div>
				<div className="w-[17px] shrink-0" />
			</div>
		</main>
	);
}

/* ---------- properties ---------- */

interface Row {
	label: string;
	value: string;
	kind?: 'color' | 'line';
	locked?: boolean;
}

const groups: { title: string; rows: Row[] }[] = [
	{
		title: '基本',
		rows: [
			{ label: '颜色', value: 'ByLayer', kind: 'color' },
			{ label: '图层', value: '0' },
			{ label: '线型', value: 'ByLayer', kind: 'line' },
			{ label: '线型比例', value: '1' },
			{ label: '线宽', value: 'ByLayer', kind: 'line' },
			{ label: '厚度', value: '0' },
		],
	},
	{
		title: '打印样式',
		rows: [
			{ label: '打印样式', value: 'ByColor', locked: true },
			{ label: '打印样...', value: '无' },
			{ label: '打印表...', value: '模型', locked: true },
			{ label: '打印表...', value: '不可用', locked: true },
		],
	},
	{
		title: '视图',
		rows: [
			{ label: '圆心 X...', value: '872.1228', locked: true },
			{ label: '圆心 Y...', value: '627.5566', locked: true },
			{ label: '圆心 Z...', value: '0', locked: true },
			{ label: '高度', value: '122.9661', locked: true },
			{ label: '宽度', value: '254.5812', locked: true },
		],
	},
	{
		title: '其他',
		rows: [
			{ label: '打开 U...', value: '是' },
			{ label: '在原点...', value: '是' },
			{ label: '每个视...', value: '是' },
			{ label: 'UCS 名称', value: '', locked: true },
		],
	},
];

function PropertyGroup({ title, rows }: { title: string; rows: Row[] }) {
	return (
		<section className="w-[174px]">
			<h2 className="flex h-[17px] items-center justify-between rounded-t-md bg-[#c8c5b5] pr-[11px] pl-[6px] leading-[16px] font-bold text-white">
				{title}
				<svg viewBox="0 0 9 10" className="h-[10px] w-[9px]" aria-hidden="true">
					<path d="M1 5l3.500 -3.500l3.500 3.500M1 9l3.500 -3.500l3.500 3.500" fill="none" stroke="#fff" strokeWidth={1.5} />
				</svg>
			</h2>
			<table className="ml-4 w-[158px] table-fixed border-separate border-spacing-0 border-l border-[#c8c5b5] leading-[15px]">
				<tbody>
					{rows.map((row, i) => (
						<tr key={i} className="h-4">
							<th scope="row" className="w-[62px] border-r border-b border-[#c8c5b5] p-0 pl-[3px] text-left font-normal whitespace-nowrap">
								<div className="h-[15px]">
									<Mix text={row.label} />
								</div>
							</th>
							<td className={`border-r border-b border-[#c8c5b5] p-0 pl-[2px] ${row.locked ? '' : 'bg-white'}`}>
								<div className="flex h-[15px] items-center">
									{row.kind === 'color' && <div className="mx-px mr-[5px] size-[10px] border border-black" />}
									{row.kind === 'line' && <div className="mr-[5px] ml-[3px] h-px w-[37px] bg-black" />}
									<Mix text={row.value} />
								</div>
							</td>
						</tr>
					))}
				</tbody>
			</table>
		</section>
	);
}

function Properties() {
	return (
		<aside className="ml-[6px] flex w-[207px] shrink-0 flex-col border-l-2 border-black bg-[#eeede8] pt-[6px] pl-2">
			<div className="flex items-center gap-1">
				<div className="flex w-[177px] flex-col gap-px">
					<div className="h-[3px] border border-t-white border-l-white border-r-[#aca899] border-b-[#aca899]" />
					<div className="h-[3px] border border-t-white border-l-white border-r-[#aca899] border-b-[#aca899]" />
				</div>
				<button type="button" aria-label="关闭特性" className="flex size-[10px] items-center justify-center border-r border-b border-black bg-white">
					<svg viewBox="0 0 8 8" className="size-2">
						<path d="M1 1l6 6M7 1l-6 6" stroke="#000" strokeWidth={1.5} />
					</svg>
				</button>
			</div>
			<div className="mt-2 flex items-center gap-[5px] pl-[2px]">
				<Combo label="选择对象" value="无选择" width="w-[107px]" height="h-6" cjk />
				<div className="flex border border-[#c8c5b5] bg-[#ece9d8]">
					{['filter', 'pick', 'quickSel'].map(name => (
						<button key={name} type="button" aria-label={name} className="flex h-[22px] w-6 items-center justify-center border-r border-[#c8c5b5] last:border-r-0">
							<Icon name={name} />
						</button>
					))}
				</div>
			</div>
			<div className="mt-[11px] flex flex-col gap-[7px] pl-1">
				{groups.map(g => (
					<PropertyGroup key={g.title} {...g} />
				))}
			</div>
			<div className="mt-auto mb-[10px] ml-[5px] h-8 w-[174px] border border-[#c8c5b5]" />
		</aside>
	);
}

/* ---------- command line, status, taskbar ---------- */

function CommandLine() {
	const prompt = <span className="font-['Liberation_Sans','Noto_Sans_CJK_SC',sans-serif]">命 令 :</span>;
	return (
		<section className="flex h-[58px] shrink-0 border-t-2 border-t-[#444] py-1">
			<div className="flex w-[17px] justify-center py-[2px]">
				<div className="w-1 border border-t-white border-l-white border-r-[#aca899] border-b-[#aca899]" />
				<div className="w-1 border border-t-white border-l-white border-r-[#aca899] border-b-[#aca899]" />
			</div>
			<div className="flex flex-1 flex-col border-t border-l-2 border-black bg-white pl-px">
				<div className="h-[14px] leading-[14px]">{prompt}</div>
				<div className="flex h-[16px] gap-3 leading-[14px]">
					{prompt}
					<span className="font-['Liberation_Mono',monospace] text-[13px]">_qsave</span>
				</div>
				<div className="-ml-px flex flex-1 items-center gap-3 border-t border-[#9c9a8c] pl-px leading-[14px]">
					<label htmlFor="command">{prompt}</label>
					<input id="command" className="h-[14px] flex-1 font-['Liberation_Mono',monospace] text-[13px] outline-none" />
				</div>
			</div>
		</section>
	);
}

const modes = [
	{ label: '捕捉', on: false },
	{ label: '栅格', on: false },
	{ label: '正交', on: false },
	{ label: '极轴', on: true },
	{ label: '对象捕捉', on: true },
	{ label: '对象追踪', on: true },
	{ label: '线宽', on: false },
	{ label: '模型', on: true },
];

function StatusBar() {
	return (
		<footer className="flex h-[23px] shrink-0 items-center gap-1 border-t-2 border-t-[#aca899] pl-[5px]">
			<div className="flex h-[18px] w-[250px] items-center border border-t-[#aca899] border-l-[#aca899] border-r-white border-b-white pl-px leading-none">
				<Mix text="774.7208, 680.6855, 0.0000" />
			</div>
			<div className="flex gap-1">
				{modes.map(m => (
					<button
						key={m.label}
						type="button"
						aria-pressed={m.on}
						className={`h-[18px] border px-px leading-[16px] ${m.on ? 'border-t-black border-l-black border-r-white border-b-white' : 'border-t-white border-l-white border-r-[#aca899] border-b-[#aca899]'}`}
					>
						{m.label}
					</button>
				))}
			</div>
		</footer>
	);
}

const tasks = [
	{ icon: 'ie', text: '网址大全－－实用...' },
	{ icon: 'ie', text: '三维网 - Google ...' },
	{ icon: 'ie', text: '三维网技术论坛 ...' },
	{ icon: 'ie', text: '『SolidWorks 技...' },
	{ icon: 'app', text: 'AutoCAD 2004 - [...', active: true },
];

function Taskbar() {
	return (
		<div className="flex h-[30px] shrink-0 items-stretch bg-linear-to-b from-[#3f8cf3] via-[#245edb] via-20% to-[#1c4fc4] text-white">
			<button
				type="button"
				className="flex w-24 items-center gap-1 rounded-r-xl bg-linear-to-b from-[#5fb85f] via-[#3c9a3c] via-20% to-[#2f8230] pl-[10px] text-[18px] leading-none italic"
			>
				<Icon name="flag" className="size-5" />
				开始
			</button>
			<button type="button" aria-label="显示桌面" className="flex w-10 items-center justify-center">
				<Icon name="desktop" />
			</button>
			<div className="flex min-w-0 flex-1 items-center gap-[2px]">
				{tasks.map(t => (
					<button
						key={t.text}
						type="button"
						className={`flex h-[25px] w-[158px] items-center gap-1 rounded-xs pl-[10px] whitespace-nowrap ${t.active ? 'bg-[#1c4cb4] shadow-[inset_1px_1px_2px_#0c2f80]' : 'bg-[#3c81f3] shadow-[inset_-1px_-1px_1px_#2358c8]'}`}
					>
						<Icon name={t.icon} className="size-4" />
						<span>
							<Mix text={t.text} />
						</span>
					</button>
				))}
			</div>
			<div className="flex w-[79px] items-center">
				<Icon name="sogou" className="size-4" />
			</div>
			<div className="flex w-[130px] items-center gap-[2px] border-l border-[#0a4bb0] bg-linear-to-b from-[#2fb0f5] via-[#1290e8] via-20% to-[#0f7fd8] pl-2">
				{['net', 'sound', 'speaker', 'shield'].map(name => (
					<Icon key={name} name={name} className="size-[17px]" />
				))}
				<span className="pl-[2px] leading-none">
					<Mix text="16:53" />
				</span>
			</div>
		</div>
	);
}

function Balloon() {
	return (
		<div className="absolute right-[9px] bottom-[63px] h-[75px] w-[185px] rounded-[14px] border border-black bg-[#ffffe1] pl-[15px]">
			<div className="flex h-7 items-center pt-[2px]">
				<div className="-ml-[5px] flex w-6">
					<Icon name="info" />
				</div>
				<strong className="flex-1 text-[13px] leading-4">通信中心</strong>
				<button type="button" aria-label="关闭通知" className="mr-2 flex size-4 items-center justify-center border border-[#aca899] bg-[#e6e3cf]">
					<svg viewBox="0 0 10 10" className="size-[10px]">
						<path d="M1 1l8 8M9 1l-8 8" stroke="#000" strokeWidth={2} />
					</svg>
				</button>
			</div>
			<p className="leading-[16px] whitespace-nowrap">使软件保持最新的简单方法。</p>
			<a href="#update" className="block leading-5 text-[#0000e0] underline">
				单击此处。
			</a>
			<svg viewBox="0 0 20 14" className="absolute top-[72px] right-[41px] h-[14px] w-5" aria-hidden="true">
				<path d="M1 0V1L18 13V0" fill="#ffffe1" />
				<path d="M1 1L17.500 13V1" fill="none" stroke="#000" />
			</svg>
		</div>
	);
}

function ImeBar() {
	return (
		<div className="absolute right-0 bottom-[30px] flex h-[22px] w-[149px] items-center gap-[2px] border border-[#c9d8ea] bg-white pl-[2px] text-[#4a86c8]">
			<Icon name="sogou" />
			<span className="w-[18px] text-center text-[15px] leading-none font-bold">中</span>
			{['moon', 'punct', 'keyboard', 'person', 'wrench'].map(name => (
				<Icon key={name} name={name} />
			))}
		</div>
	);
}

export default function App() {
	return (
		<div className="relative flex h-screen min-h-[700px] flex-col overflow-hidden bg-[#0a4a9c] font-['Noto_Sans_CJK_SC',sans-serif] text-xs text-black">
			<div className="mt-[3px] flex min-h-0 flex-1 flex-col rounded-t-md bg-[#0b48d8] pb-[3px]">
				<TitleBar />
				<div className="mr-[6px] ml-[6px] flex min-h-0 flex-1 flex-col bg-[#ece9d8]">
					<MenuBar />
					<Toolbars />
					<div className="flex min-h-0 flex-1">
						<div className="flex shrink-0 pt-px">
							<SideTools groups={drawTools} />
							<SideTools groups={dimTools} />
							<SideTools groups={modifyTools} />
						</div>
						<DrawingArea />
						<Properties />
					</div>
					<div className="h-[5px] shrink-0 border-t-2 border-white" />
					<CommandLine />
					<StatusBar />
				</div>
			</div>
			<Taskbar />
			<Balloon />
			<ImeBar />
		</div>
	);
}
